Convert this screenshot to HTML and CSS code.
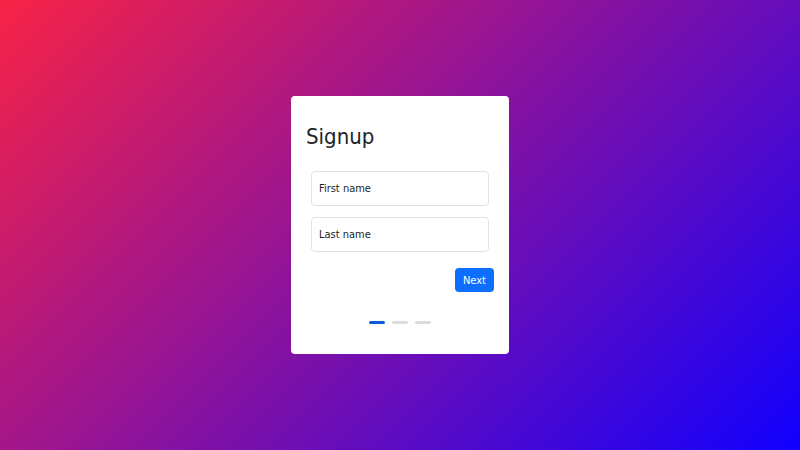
FILE: index.html
```html
<!DOCTYPE html>
<html lang="en">
<head>
<meta charset="utf-8">
<title>Signup</title>
<link rel="stylesheet" href="styles.css">
</head>
<body>
<main class="stage">
  <section class="card">
    <h1 class="card-title">Signup</h1>
    <form class="step">
      <div class="fields">
        <input class="field" type="text" placeholder="First name">
        <input class="field" type="text" placeholder="Last name">
      </div>
      <div class="actions">
        <button type="button" class="btn-next">Next</button>
      </div>
    </form>
    <div class="steps">
      <span class="dot active"></span>
      <span class="dot"></span>
      <span class="dot"></span>
    </div>
  </section>
</main>
</body>
</html>
```
FILE: styles.css
```css
* { box-sizing: border-box; }

html, body {
  margin: 0;
  height: 100%;
}

body {
  font-family: "DejaVu Sans Condensed", "DejaVu Sans", sans-serif;
  color: #212529;
  background: linear-gradient(135deg, #f82346, #1000ff);
}

.stage {
  height: 100%;
  display: flex;
  align-items: center;
  justify-content: center;
}

.card {
  width: 218px;
  height: 258px;
  background: #fff;
  border-radius: 4px;
  padding: 28px 15px 15px;
  display: flex;
  flex-direction: column;
}

.card-title {
  margin: 0 0 21px;
  font-size: 22px;
  font-weight: 400;
  line-height: 26px;
}

.fields {
  padding: 0 5px;
  display: flex;
  flex-direction: column;
  gap: 11px;
}

.field {
  width: 100%;
  height: 35px;
  border: 1px solid #dee2e6;
  border-radius: 4px;
  padding: 0 7px;
  font-family: inherit;
  font-size: 11px;
  color: #212529;
}

.field::placeholder { color: #212529; }

.actions {
  display: flex;
  justify-content: flex-end;
  margin-top: 16px;
}

.btn-next {
  height: 24px;
  padding: 0 8px;
  border: 0;
  border-radius: 4px;
  background: #0d6efd;
  color: #fff;
  font-family: inherit;
  font-size: 11px;
}

.steps {
  margin-top: 29px;
  display: flex;
  justify-content: center;
  gap: 7px;
}

.dot {
  width: 16px;
  height: 3px;
  border-radius: 2px;
  background: #dcdcdc;
}

.dot.active { background: #0b5ed7; }
```
